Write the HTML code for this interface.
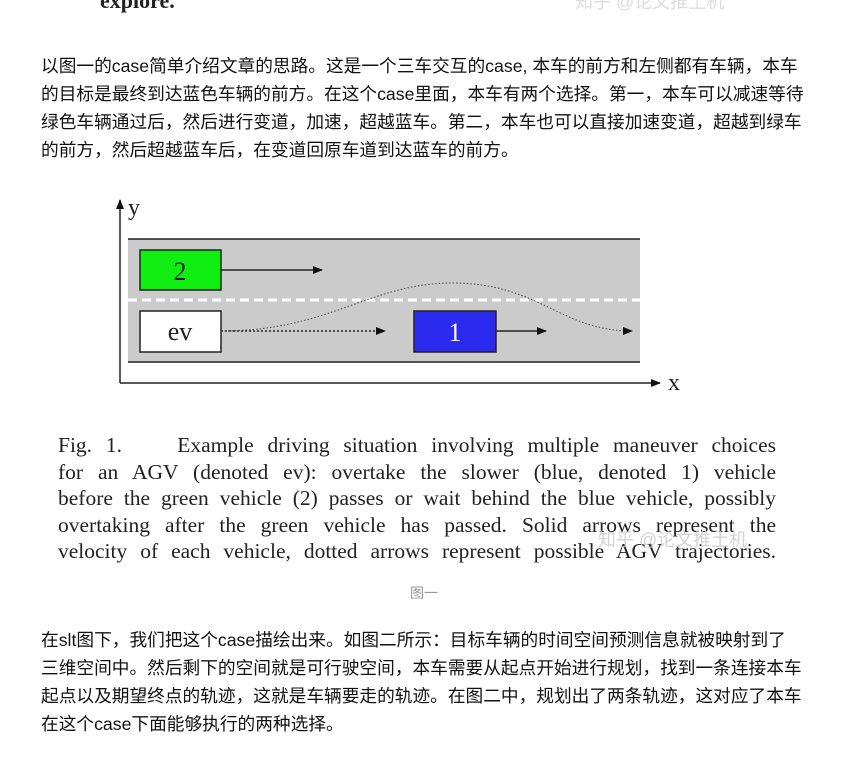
<!DOCTYPE html>
<html><head><meta charset="utf-8"><style>
body{margin:0;background:#fff;width:848px;height:770px;overflow:hidden;position:relative;font-family:"Liberation Sans","Noto Sans CJK SC",sans-serif;}
.p{position:absolute;left:41px;width:800px;font-size:17.7px;line-height:28px;color:#111;white-space:nowrap;}
.cap{position:absolute;left:58px;width:718px;font-family:"Liberation Serif",serif;font-size:21.5px;color:#222;line-height:26.5px;top:432px;}
.cap div{text-align:justify;text-align-last:justify;white-space:nowrap;}
</style></head><body>
<div style="position:absolute;left:100px;top:-12px;font-family:'Liberation Serif',serif;font-weight:bold;font-size:22px;color:#222;">explore.</div>
<div style="position:absolute;left:575px;top:-12px;font-size:18px;color:#ddd;">知乎 @论文推土机</div>
<div class="p" style="top:52px;">以图一的case简单介绍文章的思路。这是一个三车交互的case, 本车的前方和左侧都有车辆，本车<br>的目标是最终到达蓝色车辆的前方。在这个case里面，本车有两个选择。第一，本车可以减速等待<br>绿色车辆通过后，然后进行变道，加速，超越蓝车。第二，本车也可以直接加速变道，超越到绿车<br>的前方，然后超越蓝车后，在变道回原车道到达蓝车的前方。</div>
<svg style="position:absolute;left:0;top:0" width="848" height="420">
<defs><marker id="a" markerWidth="10" markerHeight="8" refX="9" refY="4" orient="auto" markerUnits="userSpaceOnUse"><path d="M0,0L10,4L0,8z" fill="#111"/></marker></defs>
<rect x="128" y="239" width="512" height="123" fill="#cbcbcb"/>
<line x1="128" y1="239" x2="640" y2="239" stroke="#222" stroke-width="1.5"/>
<line x1="128" y1="362" x2="640" y2="362" stroke="#222" stroke-width="1.5"/>
<line x1="128" y1="300" x2="640" y2="300" stroke="#fff" stroke-width="3" stroke-dasharray="9,5"/>
<line x1="120" y1="383" x2="120" y2="200" stroke="#222" stroke-width="1.5" marker-end="url(#a)"/>
<line x1="120" y1="383" x2="660" y2="383" stroke="#222" stroke-width="1.5" marker-end="url(#a)"/>
<text x="128" y="215" font-family="Liberation Serif" font-size="24" fill="#222">y</text>
<text x="668" y="390" font-family="Liberation Serif" font-size="24" fill="#222">x</text>
<rect x="140" y="250" width="81" height="40" fill="#11ee11" stroke="#222" stroke-width="1.5"/>
<text x="180" y="280" text-anchor="middle" font-family="Liberation Serif" font-size="26" fill="#222">2</text>
<rect x="140" y="311" width="81" height="41" fill="#fff" stroke="#222" stroke-width="1.5"/>
<text x="180" y="340" text-anchor="middle" font-family="Liberation Serif" font-size="26" fill="#222">ev</text>
<rect x="414" y="311" width="82" height="41" fill="#2b2bf0" stroke="#222" stroke-width="1.5"/>
<text x="455" y="341" text-anchor="middle" font-family="Liberation Serif" font-size="26" fill="#fff">1</text>
<line x1="221" y1="270" x2="322" y2="270" stroke="#222" stroke-width="1.5" marker-end="url(#a)"/>
<line x1="221" y1="331" x2="385" y2="331" stroke="#222" stroke-width="1.5" stroke-dasharray="2,2" marker-end="url(#a)"/>
<line x1="496" y1="331" x2="546" y2="331" stroke="#222" stroke-width="1.5" marker-end="url(#a)"/>
<path d="M221,331 C330,331 370,283 452,283 C540,283 560,331 632,331" fill="none" stroke="#444" stroke-width="1" stroke-dasharray="1.5,2" marker-end="url(#a)"/>
</svg>
<div class="cap">
<div>Fig. 1.&nbsp;&nbsp;&nbsp; Example driving situation involving multiple maneuver choices</div>
<div>for an AGV (denoted ev): overtake the slower (blue, denoted 1) vehicle</div>
<div>before the green vehicle (2) passes or wait behind the blue vehicle, possibly</div>
<div>overtaking after the green vehicle has passed. Solid arrows represent the</div>
<div>velocity of each vehicle, dotted arrows represent possible AGV trajectories.</div>
</div>
<div style="position:absolute;left:598px;top:526px;font-size:18px;color:rgba(200,200,200,0.8);">知乎 @论文推土机</div>
<div style="position:absolute;left:0;width:848px;text-align:center;top:583px;font-size:14px;color:#999;">图一</div>
<div class="p" style="top:626px;">在slt图下，我们把这个case描绘出来。如图二所示：目标车辆的时间空间预测信息就被映射到了<br>三维空间中。然后剩下的空间就是可行驶空间，本车需要从起点开始进行规划，找到一条连接本车<br>起点以及期望终点的轨迹，这就是车辆要走的轨迹。在图二中，规划出了两条轨迹，这对应了本车<br>在这个case下面能够执行的两种选择。</div>
</body></html>
